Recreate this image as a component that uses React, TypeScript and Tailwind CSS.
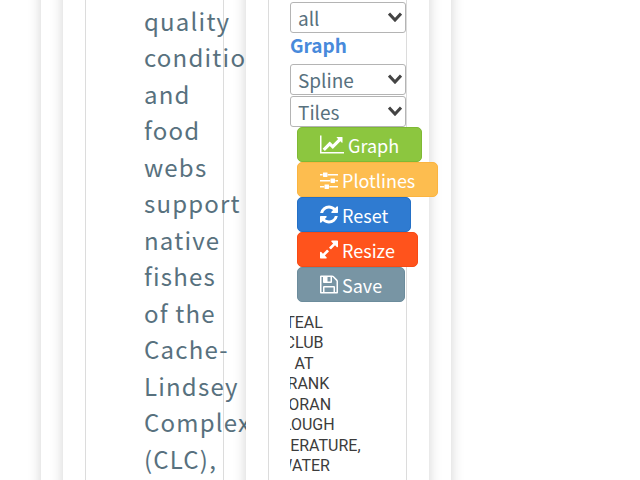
import { ReactNode } from "react";

const intro = ["quality", "conditions", "and", "food", "webs", "support", "native", "fishes", "of the", "Cache-", "Lindsey", "Complex", "(CLC),"];
const chartTitle = ["TEAL", "CLUB", "AT", "FRANK", "HORAN", "SLOUGH", "TEMPERATURE,", "WATER"];

const actions = [
  {
    label: "Graph",
    color: "bg-[#8cc63f] border-[#7fb935]",
    iconClass: "w-6",
    viewBox: "0 0 2048 1792",
    path: "M2048 1536v128h-2048v-1536h128v1408h1920zm-128-1248v435q0 21-19.5 29.5t-35.5-7.5l-121-121-633 633q-10 10-23 10t-23-10l-233-233-416 416-192-192 585-585q10-10 23-10t23 10l233 233 464-464-121-121q-16-16-7.5-35.5t29.5-19.5h435q14 0 23 9t9 23z",
  },
  {
    label: "Plotlines",
    color: "bg-[#fdbd4f] border-[#fbb440]",
    iconClass: "w-[18px]",
    viewBox: "0 0 1536 1792",
    path: "M352 1440v128h-352v-128h352zm352-128q26 0 45 19t19 45v256q0 26-19 45t-45 19h-256q-26 0-45-19t-19-45v-256q0-26 19-45t45-19h256zm160-384v128h-864v-128h864zm-640-512v128h-224v-128h224zm1312 1024v128h-736v-128h736zm-960-1152q26 0 45 19t19 45v256q0 26-19 45t-45 19h-256q-26 0-45-19t-19-45v-256q0-26 19-45t45-19h256zm640 512q26 0 45 19t19 45v256q0 26-19 45t-45 19h-256q-26 0-45-19t-19-45v-256q0-26 19-45t45-19h256zm320 128v128h-224v-128h224zm0-512v128h-864v-128h864z",
  },
  {
    label: "Reset",
    color: "bg-[#2f7bd1] border-[#2470c6]",
    iconClass: "w-[18px]",
    viewBox: "0 0 1536 1792",
    path: "M1511 1056q0 5-1 7-64 268-268 434.5t-478 166.5q-146 0-282.5-55t-243.5-157l-129 129q-19 19-45 19t-45-19-19-45v-448q0-26 19-45t45-19h448q26 0 45 19t19 45-19 45l-137 137q71 66 161 102t187 36q134 0 250-65t186-179q11-17 53-117 8-23 30-23h192q13 0 22.5 9.5t9.5 22.5zm25-800v448q0 26-19 45t-45 19h-448q-26 0-45-19t-19-45 19-45l138-138q-148-137-349-137-134 0-250 65t-186 179q-11 17-53 117-8 23-30 23h-199q-13 0-22.5-9.5t-9.5-22.5v-7q65-268 270-434.5t480-166.5q146 0 284 55.500t245 156.500l130-129q19-19 45-19t45 19 19 45z",
  },
  {
    label: "Resize",
    color: "bg-[#ff531c] border-[#f84a14]",
    iconClass: "w-[18px]",
    viewBox: "0 0 1536 1792",
    path: "M755 1056q0 13-10 23l-332 332 144 144q19 19 19 45t-19 45-45 19h-448q-26 0-45-19t-19-45v-448q0-26 19-45t45-19 45 19l144 144 332-332q10-10 23-10t23 10l114 114q10 10 10 23zm781-864v448q0 26-19 45t-45 19-45-19l-144-144-332 332q-10 10-23 10t-23-10l-114-114q-10-10-10-23t10-23l332-332-144-144q-19-19-19-45t19-45 45-19h448q26 0 45 19t19 45z",
  },
  {
    label: "Save",
    color: "bg-[#7895a4] border-[#6c8c9c]",
    iconClass: "w-[18px]",
    viewBox: "0 0 1536 1792",
    path: "M384 1536h768v-384h-768v384zm896 0h128v-896q0-14-10-38.5t-20-34.5l-281-281q-10-10-34-20t-39-10v416q0 40-28 68t-68 28h-576q-40 0-68-28t-28-68v-416h-128v1280h128v-416q0-40 28-68t68-28h832q40 0 68 28t28 68v416zm-384-928v-320q0-13-9.5-22.5t-22.5-9.5h-192q-13 0-22.5 9.5t-9.5 22.5v320q0 13 9.5 22.5t22.5 9.5h192q13 0 22.5-9.5t9.5-22.5zm640 32v928q0 40-28 68t-68 28h-1344q-40 0-68-28t-28-68v-1344q0-40 28-68t68-28h928q40 0 88 20t76 48l280 280q28 28 48 76t20 88z",
  },
];

function Card({ children, className = "" }: { children: ReactNode; className?: string }) {
  return (
    <section className={`min-w-0 bg-white px-[22px] shadow-[0_0_12px_rgba(0,0,0,0.18)] ${className}`}>
      <div className="h-full border-x border-[#dcdcdc] pt-8">{children}</div>
    </section>
  );
}

function Select({ id, options }: { id: string; options: string[] }) {
  return (
    <div className="relative h-[31px]">
      <select
        id={id}
        aria-label={id}
        className="block h-full w-full appearance-none rounded-[3px] border border-[#b4b4b4] bg-white pl-[7px] text-[19px] leading-7 text-[#58717e]"
      >
        {options.map((o) => (
          <option key={o}>{o}</option>
        ))}
      </select>
      <svg viewBox="0 0 14 10" className="pointer-events-none absolute top-[10px] right-1 h-[10px] w-[14px]" fill="none" stroke="#444" strokeWidth="3">
        <path d="M1 1.500L7 8L13 1.500" />
      </svg>
    </div>
  );
}

export default function App() {
  return (
    <main className="flex h-screen overflow-hidden bg-white font-['Noto_Sans_CJK_SC',sans-serif]">
      <div className="-my-8 mr-[189px] ml-[41px] grid min-w-0 flex-1 grid-cols-2 bg-white px-[22px] shadow-[0_0_12px_rgba(0,0,0,0.18)]">
        <Card>
          <p className="mt-[3px] ml-[58px] text-2xl leading-[1.52] tracking-wider whitespace-nowrap text-[#58717e]">
            {intro.map((line) => (
              <span key={line} className="block">{line}</span>
            ))}
          </p>
        </Card>

        <Card className="relative z-10">
          <div className="pt-0.5 pl-[21px]">
            <Select id="interval" options={["all"]} />
            <label htmlFor="graph-type" className="mb-[7px] block text-[19px] leading-6 font-bold text-[#488adb]">
              Graph
            </label>
            <div className="flex flex-col gap-px">
              <Select id="graph-type" options={["Spline", "Line", "Area"]} />
              <Select id="layout" options={["Tiles", "List"]} />
            </div>

            <div className="flex flex-col items-start pl-[7px]">
              {actions.map((a) => (
                <button
                  key={a.label}
                  type="button"
                  className={`flex h-[35px] items-center gap-1 rounded-[5px] border px-[22px] text-lg leading-7 whitespace-nowrap text-white ${a.color}`}
                >
                  <svg viewBox={a.viewBox} className={`h-[21px] shrink-0 ${a.iconClass}`} fill="currentColor">
                    <path d={a.path} />
                  </svg>
                  {a.label}
                </button>
              ))}
            </div>

            {/* title is centred on a plot narrower than its text, so the left side is clipped */}
            <div className="mt-[11px] overflow-hidden font-[Roboto,sans-serif] text-base leading-[1.28] text-[#3c3c3c]">
              <h2 className="flex w-7 flex-col items-center">
                {chartTitle.map((line) => (
                  <span key={line}>{line}</span>
                ))}
              </h2>
            </div>
          </div>
        </Card>
      </div>
    </main>
  );
}
